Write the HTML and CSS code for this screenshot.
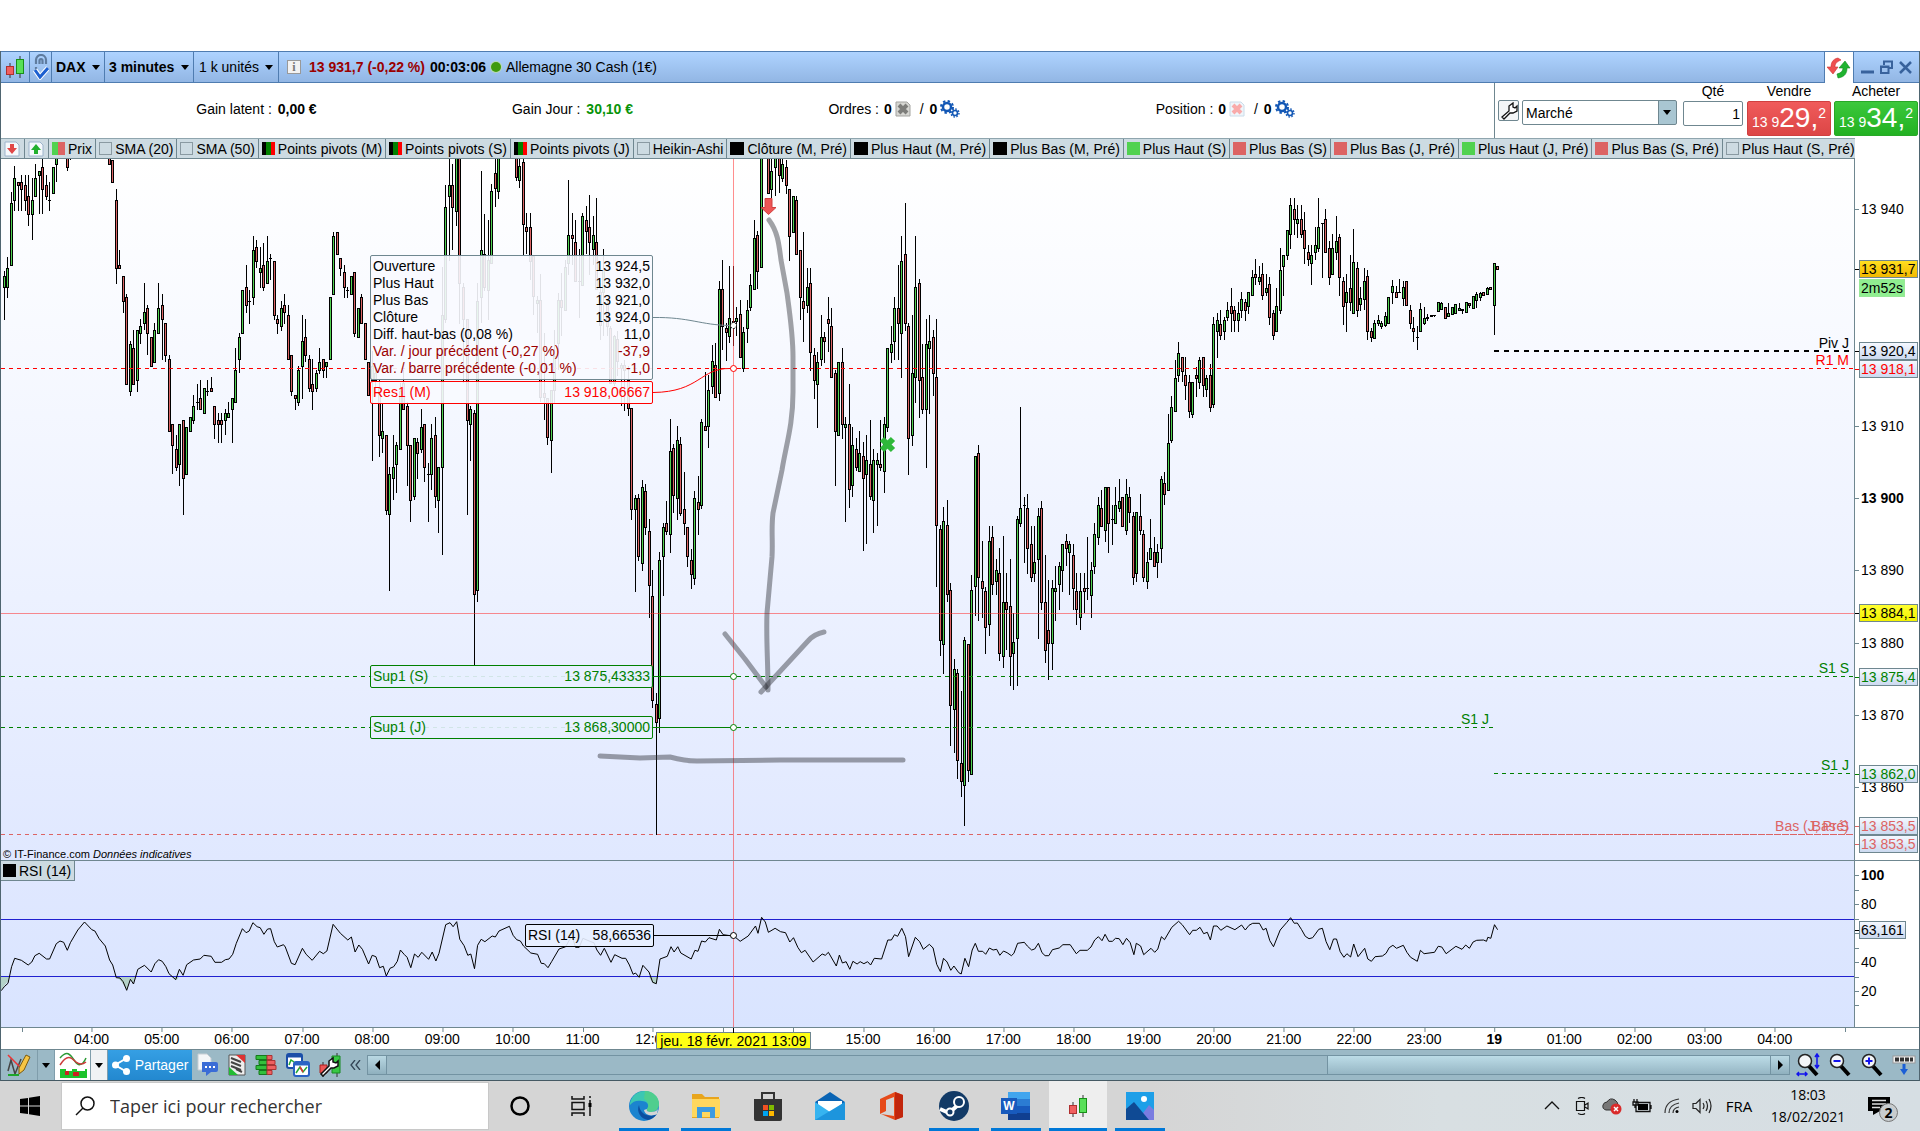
FILE: index.html
```html
<!DOCTYPE html>
<html lang="fr">
<head>
<meta charset="utf-8">
<title>DAX - 3 minutes</title>
<link rel="stylesheet" href="styles.css">
</head>
<body>
<svg width="0" height="0" class="defs" aria-hidden="true">
  <defs>
    <symbol id="candles" viewBox="0 0 20 24">
      <path d="M5 8v15M15 1v22" stroke="#333" stroke-width="1"/>
      <rect x="1.500" y="11.500" width="7" height="8" fill="#f06060" stroke="#b03030"/>
      <rect x="11.500" y="4.500" width="7" height="14" fill="#58e058" stroke="#189018"/>
    </symbol>
    <symbol id="gears" viewBox="0 0 20 18">
      <circle cx="7" cy="7" r="4" fill="none" stroke="#1257b5" stroke-width="2.500"/>
      <circle cx="7" cy="7" r="6" fill="none" stroke="#1257b5" stroke-width="2" stroke-dasharray="2.400 2.300"/>
      <circle cx="15" cy="13" r="2.500" fill="none" stroke="#1257b5" stroke-width="1.600"/>
      <circle cx="15" cy="13" r="4" fill="none" stroke="#1257b5" stroke-width="1.400" stroke-dasharray="1.600 1.500"/>
    </symbol>
    <symbol id="glass" viewBox="0 0 24 24">
      <path d="M12 12l9 10" stroke="#000" stroke-width="4"/>
      <circle cx="9" cy="8" r="6.500" fill="#f4f6f8" stroke="#222" stroke-width="1.500"/>
    </symbol>
  </defs>
</svg>

<main class="app">
  <header class="titlebar">
    <button class="cell cell-logo" aria-label="Graphique"><svg width="20" height="24"><use href="#candles"/></svg></button>
    <button class="cell cell-link" aria-label="Lier">
      <svg width="16" height="26" viewBox="0 0 16 26"><path d="M3 10V6a5 5 0 0 1 10 0v4M6.500 10V6.500a1.500 1.500 0 0 1 3 0V10" fill="none" stroke="#5f7c9f" stroke-width="2.200"/><path d="M3 13v2a5 5 0 0 0 10 0v-2" fill="none" stroke="#5f7c9f" stroke-width="2.200"/><path d="M2 16l5 7 8-9" fill="none" stroke="#fff" stroke-width="5"/><path d="M2 16l5 7 8-9" fill="none" stroke="#1c5fd0" stroke-width="3"/></svg>
    </button>
    <label class="cell pick"><select class="bold" aria-label="Instrument"><option>DAX</option></select></label>
    <label class="cell pick"><select class="bold" aria-label="Unité de temps"><option>3 minutes</option></select></label>
    <label class="cell pick"><select aria-label="Historique"><option>1 k unités</option></select></label>
    <div class="quote">
      <button class="info" aria-label="Informations">i</button>
      <b class="loss">13 931,7 (-0,22 %)</b>
      <b>00:03:06</b>
      <i class="dot"></i>
      <span>Allemagne 30 Cash (1€)</span>
    </div>
    <button class="swap" aria-label="Trading">
      <svg width="24" height="22" viewBox="0 0 24 22"><path d="M11 1C5 2 4 7 4 10H0l6 7 5-7H8c0-3 1-5 6-7z" fill="#ee4f4f" stroke="#c33" stroke-width=".6"/><path d="M11 21c7-1 9-5 9-10h3l-5-7-6 7h4c0 3-2 5-6 6z" fill="#1fb32f" stroke="#128a1e" stroke-width=".6"/></svg>
    </button>
    <div class="winbtns">
      <button aria-label="Réduire"><svg width="13" height="14"><path d="M0 12h13" stroke="#38629c" stroke-width="3"/></svg></button>
      <button aria-label="Restaurer"><svg width="13" height="14" viewBox="0 0 13 14"><path d="M4 5V1.500h8V8H9M3 1.500h9M1 6.500h7.500V13H1zM1 7h7" fill="none" stroke="#38629c" stroke-width="2"/></svg></button>
      <button aria-label="Fermer"><svg width="13" height="14" viewBox="0 0 13 14"><path d="M1 2l11 11M12 2L1 13" stroke="#38629c" stroke-width="2.500"/></svg></button>
    </div>
  </header>

  <section class="trade">
    <div class="stats">
      <p>Gain latent : <b>0,00 €</b></p>
      <p>Gain Jour : <b class="gain">30,10 €</b></p>
      <p class="with-icons">Ordres : <b>0</b>
        <button aria-label="Annuler les ordres"><svg width="16" height="16" viewBox="0 0 16 16"><path d="M1 1h11l3 3v11H1z" fill="#d6d6d2" stroke="#a3a3a0"/><path d="M4 4l8 8M12 4l-8 8" stroke="#7d7d7a" stroke-width="4"/></svg></button>
        <span>/ <b>0</b></span><button aria-label="Réglages des ordres"><svg width="20" height="18"><use href="#gears"/></svg></button></p>
      <p class="with-icons">Position : <b>0</b>
        <button aria-label="Clôturer la position"><svg width="16" height="16" viewBox="0 0 16 16"><path d="M1 1h11l3 3v11H1z" fill="#eff5fa" stroke="#cbdcea"/><path d="M4 4l8 8M12 4l-8 8" stroke="#f9aaaa" stroke-width="4"/></svg></button>
        <span>/ <b>0</b></span><button aria-label="Réglages de la position"><svg width="20" height="18"><use href="#gears"/></svg></button></p>
    </div>
    <form class="order">
      <button type="button" class="wrench" aria-label="Options"><svg width="18" height="18" viewBox="0 0 18 18"><path d="M2 15L9 9V4l4-3v4l2 1 2-2v5l-4 2h-3l-6 6z" fill="#fff" stroke="#111" stroke-width="1.300"/></svg></button>
      <label class="type"><select aria-label="Type d'ordre"><option>Marché</option></select></label>
      <div class="qty"><label for="qty">Qté</label><input id="qty" value="1"></div>
      <div class="side"><label for="sell">Vendre</label><button type="button" id="sell" class="sell"><small>13 9</small><span>29,</span><sup>2</sup></button></div>
      <div class="side"><label for="buy">Acheter</label><button type="button" id="buy" class="buy"><small>13 9</small><span>34,</span><sup>2</sup></button></div>
    </form>
  </section>

  <nav class="legend">
    <button class="arrow" aria-label="Vente"><svg width="16" height="16" viewBox="0 0 16 16"><path d="M1 1h11l3 3v11H1z" fill="#f5f9fc" stroke="#9db4cc"/><path d="M6 3h4v4h3l-5 6-5-6h3z" fill="#e04848"/></svg></button>
    <button class="arrow" aria-label="Achat"><svg width="16" height="16" viewBox="0 0 16 16"><path d="M1 1h11l3 3v11H1z" fill="#f5f9fc" stroke="#9db4cc"/><path d="M6 13h4V9h3L8 3 3 9h3z" fill="#22b02e"/></svg></button>
    <button><i class="sw price"></i>Prix</button>
    <button><i class="sw empty"></i>SMA (20)</button>
    <button><i class="sw empty"></i>SMA (50)</button>
    <button><i class="sw pivot"></i>Points pivots (M)</button>
    <button><i class="sw pivot"></i>Points pivots (S)</button>
    <button><i class="sw pivot"></i>Points pivots (J)</button>
    <button><i class="sw empty"></i>Heikin-Ashi</button>
    <button><i class="sw black"></i>Clôture (M, Pré)</button>
    <button><i class="sw black"></i>Plus Haut (M, Pré)</button>
    <button><i class="sw black"></i>Plus Bas (M, Pré)</button>
    <button><i class="sw green"></i>Plus Haut (S)</button>
    <button><i class="sw red"></i>Plus Bas (S)</button>
    <button><i class="sw red"></i>Plus Bas (J, Pré)</button>
    <button><i class="sw green"></i>Plus Haut (J, Pré)</button>
    <button><i class="sw red"></i>Plus Bas (S, Pré)</button>
    <button><i class="sw empty"></i>Plus Haut (S, Pré)</button>
  </nav>

  <section class="pane price-pane">
    <div class="plot">
      <svg id="price" viewBox="1 159 1853 701" preserveAspectRatio="none">
        <g id="bars" shape-rendering="crispEdges"></g>
        <g shape-rendering="crispEdges" fill="none">
          <path d="M1 368.500H1854" stroke="#f00" stroke-dasharray="4 4"/>
          <path d="M1494 351H1850" stroke="#000" stroke-width="2" stroke-dasharray="5 5"/>
          <path d="M1 676.500H1854" stroke="#008000" stroke-dasharray="4 4"/>
          <path d="M1 727.500H1494" stroke="#008000" stroke-dasharray="4 4"/>
          <path d="M1494 773.500H1850" stroke="#008000" stroke-dasharray="4 4"/>
          <path d="M1 834.500H1494" stroke="#dc6464" stroke-dasharray="4 4"/>
          <path d="M1494 834.500H1854" stroke="#dc6464" stroke-dasharray="7 1"/>
          <path d="M653 676.500H733M653 727.500H733" stroke="#008000"/>
          <path d="M1 613.500H1854M733.500 159V860" stroke="#ff3232" stroke-opacity=".55"/>
        </g>
        <path d="M653 317.500C690 317 700 325 730 325.500" fill="none" stroke="#6f8790"/>
        <path d="M653 392.500C700 392 700 368 730 368.500" fill="none" stroke="#f00"/>
        <g fill="#fff"><circle cx="733.500" cy="325.500" r="3" stroke="#000" stroke-dasharray="2 1"/><circle cx="733.500" cy="368.500" r="3" stroke="#f00"/><circle cx="733.500" cy="676.500" r="3" stroke="#008000"/><circle cx="733.500" cy="727.500" r="3" stroke="#008000"/></g>
        <path d="M765 198.500h7v9h4l-7.500 7-7.500-7h4z" fill="#ee5555" stroke="#d04040"/>
        <path d="M882 439l11 11M893 439l-11 11" stroke="#2fb83a" stroke-width="6"/>
        <g fill="none" stroke="#30333a" stroke-opacity=".45" stroke-width="5" stroke-linecap="round" stroke-linejoin="round">
          <path d="M769 220C778 232 779 245 781 260L787 293C790 315 793 335 793 357V392C793 425 786 445 782 470L773 513C771 530 773 540 772 557L767 613C766 640 768 660 768 690"/>
          <path d="M725 634L745 659 766 687"/><path d="M761 692L808 641Q814 634 824 632"/>
          <path d="M600 756L640 758 670 757Q685 761 697 761L780 760 903 760"/>
        </g>
      </svg>
      <div id="price-tags"></div>
      <dl class="tip bar-tip">
        <div><dt>Ouverture</dt><dd>13 924,5</dd></div>
        <div><dt>Plus Haut</dt><dd>13 932,0</dd></div>
        <div><dt>Plus Bas</dt><dd>13 921,0</dd></div>
        <div><dt>Clôture</dt><dd>13 924,0</dd></div>
        <div><dt>Diff. haut-bas (0,08 %)</dt><dd>11,0</dd></div>
        <div class="loss"><dt>Var. / jour précédent (-0,27 %)</dt><dd>-37,9</dd></div>
        <div class="loss"><dt>Var. / barre précédente (-0,01 %)</dt><dd>-1,0</dd></div>
      </dl>
      <dl class="tip res-tip"><div><dt>Res1 (M)</dt><dd>13 918,06667</dd></div></dl>
      <dl class="tip sup-tip sup-s"><div><dt>Sup1 (S)</dt><dd>13 875,43333</dd></div></dl>
      <dl class="tip sup-tip sup-j"><div><dt>Sup1 (J)</dt><dd>13 868,30000</dd></div></dl>
      <p class="credit">© IT-Finance.com <em>Données indicatives</em></p>
    </div>
    <div class="axis" id="price-axis"></div>
  </section>

  <section class="pane rsi-pane">
    <div class="plot">
      <svg id="rsi" viewBox="1 861 1853 166" preserveAspectRatio="none">
        <path d="M1 977V990L8 981 9 977zM117 977L121 981 127 990 130 979 133 983 135 977zM172 977L177 980 179 977zM649 977L653 983 656 984 658 977z" fill="#b4d2c8"/>
        <path d="M1 919.500H1854M1 976.500H1854" stroke="#2020d0" shape-rendering="crispEdges"/>
        <path id="rsi-line" fill="none" stroke="#000"/>
        <path d="M733.500 861V1027" stroke="#ff3232" stroke-opacity=".55" shape-rendering="crispEdges"/>
        <path d="M653 935.500H731" stroke="#000" shape-rendering="crispEdges"/>
        <circle cx="733.500" cy="935.500" r="3" fill="#fff" stroke="#000"/>
      </svg>
      <button class="rsi-name"><i class="sw black"></i>RSI (14)</button>
      <dl class="tip rsi-tip"><div><dt>RSI (14)</dt><dd>58,66536</dd></div></dl>
    </div>
    <div class="axis" id="rsi-axis"></div>
  </section>

  <section class="time-row"><div class="time-axis" id="time-axis"></div></section>

  <footer class="toolbar">
    <button class="tool draw" aria-label="Dessiner"><svg width="24" height="24" viewBox="0 0 24 24"><path d="M1 18L4 7l4 14 6-15M1 22h11" fill="none" stroke="#444" stroke-width="1.500"/><path d="M1 22h11" stroke="#1da62a" stroke-width="2"/><path d="M1 2l12 12" stroke="#e33" stroke-width="1.500"/><path d="M12 15L19 2l4 2-6 13-5 4z" fill="#f6c544" stroke="#7a5a10"/></svg></button>
    <button class="drop" aria-label="Plus d'outils"></button>
    <button class="tool style" aria-label="Indicateurs"><svg width="28" height="26" viewBox="0 0 28 26"><path d="M1 6C8-2 11 2 15 8s8 7 12-2" fill="none" stroke="#2a9a35" stroke-width="1.500"/><path d="M1 13C8 2 12 5 17 10q5 4 10 0" fill="none" stroke="#cc3a3a" stroke-width="1.500"/><path d="M1 17h6v2h6v-2h5v2h8v-2h2v9H1z" fill="#1ec32c"/><path d="M6 19h4v4H6zM14 20h6v4h-6z" fill="#c22"/></svg></button>
    <button class="drop light" aria-label="Plus d'indicateurs"></button>
    <button class="share"><svg width="18" height="20" viewBox="0 0 18 20"><path d="M15 3L3 10l12 7" fill="none" stroke="#fff" stroke-width="2"/><g fill="#fff"><circle cx="14.500" cy="3.500" r="3.500"/><circle cx="3.500" cy="10" r="3.500"/><circle cx="14.500" cy="16.500" r="3.500"/></g></svg>Partager</button>
    <div class="icons">
      <button aria-label="Commentaires"><svg width="22" height="24" viewBox="0 0 22 24"><path d="M1 1h9l4 4v12H1z" fill="#f4f6f8" stroke="#c7ced4"/><path d="M5 9h14q2 0 2 2v6q0 2-2 2h-5l-5 4v-4H5z" fill="#3a6cd6"/><path d="M8 14h2M12 14h2M16 14h2" stroke="#fff" stroke-width="2"/></svg></button>
      <button aria-label="Rapport"><svg width="18" height="22" viewBox="0 0 18 22"><path d="M1 1h16v20H1z" fill="#eee" stroke="#555"/><path d="M3 4l10 4M3 8l10 4M3 12l10 4M8 15l6 3" stroke="#444" stroke-width="2"/><path d="M8 1h9v8z" fill="#d33"/><path d="M1 13v8h9z" fill="#2b3"/></svg></button>
      <button aria-label="Carnet"><svg width="22" height="22" viewBox="0 0 22 22"><g fill="#32c03c" stroke="#147a1c"><path d="M1 1.500h11v4H1zM4 6.500h8v4H4zM1 11.500h11v4H1zM4 16.500h8v4H4z"/></g><g fill="#ee6060" stroke="#a33"><path d="M12 1.500h5v4h-5zM12 6.500h8v4h-8zM12 11.500h9v4h-9zM12 16.500h5v4h-5z"/></g></svg></button>
      <button aria-label="Fenêtres"><svg width="24" height="24" viewBox="0 0 24 24"><rect x="1" y="1" width="15" height="14" rx="2" fill="#fff" stroke="#1b4ea8" stroke-width="2"/><path d="M1 3h15" stroke="#1b4ea8" stroke-width="3"/><rect x="8" y="9" width="15" height="14" rx="2" fill="#fff" stroke="#2a63c4" stroke-width="2"/><path d="M8 11h15" stroke="#2a63c4" stroke-width="3"/><path d="M3 12l2-5 3 2M10 20l4-6 3 5 4-5" fill="none" stroke="#2a3" stroke-width="1.500"/><path d="M14 14l3 5" stroke="#d33" stroke-width="1.500"/></svg></button>
      <button aria-label="Stratégies"><svg width="22" height="24" viewBox="0 0 22 24"><path d="M4 9v15M18 0v24" stroke="#333"/><path d="M1 12h7v8H1z" fill="#e55"  stroke="#a22"/><path d="M13 3h8v17h-8z" fill="#38c844" stroke="#178a20"/><path d="M2 21l8-8V8l4-3v4l3 1 2-2v5l-4 2h-3l-8 8z" fill="#fff" stroke="#111" stroke-width="1.500"/></svg></button>
      <button class="fold" aria-label="Réduire la barre"><svg width="11" height="10" viewBox="0 0 11 10"><path d="M5 0L1 5l4 5M10 0L6 5l4 5" fill="none" stroke="#345" stroke-width="1.300"/></svg></button>
    </div>
    <div class="scroll">
      <button class="end left" aria-label="Défiler à gauche"></button>
      <div class="track"><div class="thumb"></div></div>
      <button class="end right" aria-label="Défiler à droite"></button>
    </div>
    <div class="zooms">
      <button aria-label="Zoom auto"><svg width="24" height="24" viewBox="0 0 24 24"><use href="#glass"/><path d="M21 2v12M19 4l2-3 2 3M19 12l2 3 2-3M1 21h10M3 19l-2 2 2 2M9 19l2 2-2 2" fill="none" stroke="#11e" stroke-width="1.500"/></svg></button>
      <button aria-label="Zoom arrière"><svg width="24" height="24" viewBox="0 0 24 24"><use href="#glass"/><path d="M5.500 8h7" stroke="#11e" stroke-width="2"/></svg></button>
      <button aria-label="Zoom avant"><svg width="24" height="24" viewBox="0 0 24 24"><use href="#glass"/><path d="M5.500 8h7M9 4.500v7" stroke="#11e" stroke-width="2"/></svg></button>
      <button aria-label="Clavier"><svg width="24" height="24" viewBox="0 0 24 24"><rect x="1" y="3" width="22" height="7" fill="#f2f2f2" stroke="#999"/><path d="M3 6.500h18" stroke="#333" stroke-width="4" stroke-dasharray="4 1"/><path d="M12 11v8" stroke="#1b5fd6" stroke-width="3"/><path d="M8 16h8l-4 6z" fill="#1b5fd6"/></svg></button>
    </div>
  </footer>
</main>

<footer class="taskbar">
  <button class="start" aria-label="Démarrer"><svg width="20" height="20" viewBox="0 0 20 20"><path d="M0 3l8-1v7.500H0zM9 1.800L20 0v9.500H9zM0 10.500h8V18l-8-1zM9 10.500h11V20L9 18.200z"/></svg></button>
  <label class="search"><svg width="20" height="20" viewBox="0 0 20 20"><circle cx="12.500" cy="7.500" r="6.500" fill="none" stroke="#111" stroke-width="1.500"/><path d="M8 12l-7 7" stroke="#111" stroke-width="1.500"/></svg><input placeholder="Taper ici pour rechercher" aria-label="Rechercher"></label>
  <nav class="apps">
    <button aria-label="Cortana"><svg width="22" height="22"><circle cx="11" cy="11" r="8.500" fill="none" stroke="#000" stroke-width="2.500"/></svg></button>
    <button aria-label="Affichage des tâches"><svg width="22" height="22" viewBox="0 0 22 22"><path d="M1 1v3h12V1M1 21v-3h12v3M1 7.500h12v7H1zM19 1v2M19 5v3M19 12v9" fill="none" stroke="#111" stroke-width="1.500"/><path d="M17.500 8h3v4h-3z"/></svg></button>
    <button class="open" aria-label="Edge"><svg width="30" height="30" viewBox="0 0 30 30"><circle cx="15" cy="15" r="15" fill="#1b84cf"/><path d="M1 12C3 4 9 0 16 0c8 0 14 6 14 13 0 5-4 8-8 8-3 0-5-1-4-3 3-4 0-8-5-8C8 9 4 10 1 14z" fill="#3cc7b2"/><path d="M16 0c8 0 14 6 14 13 0 5-4 8-8 8-3 0-5-1-4-3 3-4 0-9-3-10z" fill="#57d27f" opacity=".7"/><path d="M10 14c-3 7 2 14 9 15 4-1 7-3 9-6-7 4-17 1-18-9z" fill="#0c4fa0"/><path d="M18 18c-1 2 1 3 4 3 3 0 6-1 7-3l-1 5c-6 3-12 1-13-4z" fill="#d5d5d5"/></svg></button>
    <button class="open" aria-label="Explorateur"><svg width="28" height="26" viewBox="0 0 28 26"><path d="M0 1h10l3 3h14v21H0z" fill="#e8a51d"/><path d="M0 6h28v18H0z" fill="#ffd75e"/><path d="M5 25V14h18v11h-5v-6h-8v6z" fill="#3d9be0"/></svg></button>
    <button aria-label="Store"><svg width="28" height="30" viewBox="0 0 28 30"><path d="M8 9V2h12v7" fill="none" stroke="#333" stroke-width="2"/><path d="M0 8h28v20q0 2-2 2H2q-2 0-2-2z" fill="#333"/><path d="M9 14h5v5H9z" fill="#f25022"/><path d="M15 14h5v5h-5z" fill="#7fba00"/><path d="M9 20h5v5H9z" fill="#00a4ef"/><path d="M15 20h5v5h-5z" fill="#ffb900"/></svg></button>
    <button aria-label="Courrier"><svg width="30" height="28" viewBox="0 0 30 28"><path d="M0 10L15 0l15 10v18H0z" fill="#0a64b4"/><path d="M3 9h24v9L15 22 3 18z" fill="#fff"/><path d="M0 10l15 10L30 10v18H0z" fill="#36b4f0"/><path d="M0 28L30 10v18z" fill="#1d95dd"/></svg></button>
    <button aria-label="Office"><svg width="24" height="28" viewBox="0 0 24 28"><path d="M0 7L15 0l8 3v22l-8 3L1 22l13 2V5L6 8v11l-6 3z" fill="#e64a19"/><path d="M15 0l8 3v22l-8 3z" fill="#c2260c"/></svg></button>
    <button class="open" aria-label="Steam"><svg width="30" height="30" viewBox="0 0 30 30"><circle cx="15" cy="15" r="15" fill="#123a66"/><path d="M1 18l9 4 9-8" stroke="#fff" stroke-width="4" fill="none"/><circle cx="20" cy="11" r="5" fill="#123a66" stroke="#fff" stroke-width="2"/><circle cx="11" cy="21" r="3.500" fill="#123a66" stroke="#fff" stroke-width="2"/></svg></button>
    <button class="open" aria-label="Word"><svg width="30" height="28" viewBox="0 0 30 28"><path d="M7 0h22v7H7z" fill="#41a5ee"/><path d="M7 7h22v7H7z" fill="#2b7cd3"/><path d="M7 14h22v7H7z" fill="#185abd"/><path d="M7 21h22v7H7z" fill="#103f91"/><path d="M0 6h16v16H0z" fill="#185abd"/><text x="8" y="18" text-anchor="middle" class="word">W</text></svg></button>
    <button class="open active" aria-label="ProRealTime"><svg width="22" height="24"><use href="#candles"/></svg></button>
    <button class="open" aria-label="Photos"><svg width="28" height="28" viewBox="0 0 28 28"><path d="M0 0h28v28H0z" fill="#1e9fe8"/><path d="M12 28l11-15 5 5v10z" fill="#7a7ce0"/><path d="M0 17l8-7 15 18H0z" fill="#0f4a94"/><circle cx="18" cy="7" r="3" fill="#fff"/></svg></button>
  </nav>
  <div class="tray">
    <button aria-label="Icônes cachées"><svg width="16" height="16" viewBox="0 0 16 16"><path d="M1 11l7-7 7 7" fill="none" stroke="#111" stroke-width="1.300"/></svg></button>
    <button aria-label="Réunion"><svg width="16" height="18" viewBox="0 0 16 18"><path d="M2.500 4.500h8v9h-8zM11 8l3-2v6l-3-2M4 1.500Q8-.5 11 1.500M4 16.500q4 2 7 0" fill="none" stroke="#111" stroke-width="1.200"/></svg></button>
    <button aria-label="OneDrive"><svg width="20" height="18" viewBox="0 0 20 18"><path d="M4 13q-4-1-3-5 1-3 4-3 3-5 8-2 3 2 3 5 3 2 1 5z" fill="#777" stroke="#333"/><circle cx="14" cy="12" r="5.500" fill="#d92b2b"/><path d="M12 10l4 4M16 10l-4 4" stroke="#fff" stroke-width="1.500"/></svg></button>
    <button aria-label="Batterie"><svg width="20" height="14" viewBox="0 0 20 14"><path d="M4 3.500h14v9H4zM19 6v4M2 0v3M5 0v3M1 3h5v3H1zM3 6v3" fill="none" stroke="#111" stroke-width="1.300"/><path d="M6 5h10v6H6z"/></svg></button>
    <button aria-label="Wi-Fi"><svg width="18" height="16" viewBox="0 0 18 16"><path d="M2 15Q2 3 16 1M6 15Q6 7 16 5M10 15q0-5 6-6" fill="none" stroke="#333" stroke-width="1.200"/><circle cx="14" cy="13.500" r="1.500"/></svg></button>
    <button aria-label="Volume"><svg width="20" height="16" viewBox="0 0 20 16"><path d="M1 5.500h3l4-4v13l-4-4H1zM11 5q2 3 0 6M14 3q3 5 0 10M17 1q4 7 0 14" fill="none" stroke="#222" stroke-width="1.200"/></svg></button>
    <button class="lang">FRA</button>
    <button class="clock"><time>18:03</time><time>18/02/2021</time></button>
    <button class="notif" aria-label="Notifications"><svg width="22" height="18" viewBox="0 0 22 18"><path d="M0 0h22v14H12l-7 4v-4H0z"/><path d="M4 3.500h14M4 7h14M4 10.500h8" stroke="#ddd" stroke-width="1.500"/></svg><span class="badge">2</span></button>
  </div>
</footer>
<script src="chart.js"></script>
</body>
</html>
```

FILE: styles.css
```css
* { box-sizing: border-box; }
body {
  margin: 0;
  min-height: 100vh;
  padding-top: 51px;
  display: flex;
  flex-direction: column;
  background: #fff;
  color: #000;
  font: 14px/16px "Liberation Sans", Arial, sans-serif;
}
p, dl, dd { margin: 0; }
svg { display: block; flex: none; }
button, select, input { font: inherit; color: inherit; margin: 0; }
button { border: 0; padding: 0; background: none; }
select { appearance: none; border: 0; padding: 0; background: none; border-radius: 0; }
.defs { position: absolute; }
.bold { font-weight: bold; }
.loss { color: #9b0000; }
.gain { color: #089408; }

.app {
  flex: 1;
  display: flex;
  flex-direction: column;
  border-left: 1px solid #4f6570;
  border-right: 1px solid #4f6570;
  border-bottom: 1px solid #455a64;
}

/* title bar */
.titlebar {
  height: 32px;
  display: flex;
  border-top: 1px solid #4f7cb0;
  border-bottom: 1px solid #4f7cb0;
  background: linear-gradient(#aed3ff, #92b6e4);
}
.cell {
  display: flex;
  align-items: center;
  justify-content: center;
  border-right: 1px solid #4f7cb0;
}
.cell-logo { width: 29px; }
.cell-link { width: 22px; }
.pick { padding: 0 4px; gap: 6px; }
.pick:nth-child(5) { padding: 0 5px; }
.pick::after, .drop::after, .type::after {
  content: "";
  border: 4px solid transparent;
  border-top: 5px solid #000;
  border-bottom: 0;
}
.quote { flex: 1; display: flex; align-items: center; gap: 5px; padding-left: 8px; }
.info {
  width: 14px;
  height: 14px;
  margin-right: 3px;
  border: 1px solid #999;
  background: #f2f2f2;
  color: #777;
  font: bold 12px/12px "Liberation Serif", serif;
}
.dot { width: 10px; height: 10px; border-radius: 5px; background: #3f9a0c; box-shadow: 0 0 0 1px #b9d9b0; }
.swap {
  width: 30px;
  margin-bottom: -1px;
  display: flex;
  align-items: center;
  justify-content: center;
  border: solid #4f7cb0;
  border-width: 0 1px;
  background: #fff;
}
.winbtns { width: 65px; display: flex; align-items: center; justify-content: center; gap: 6px; }

/* account and order row */
.trade { height: 55px; display: flex; }
.stats { flex: 1; display: flex; align-items: center; justify-content: space-evenly; padding: 0 4px 3px 0; }
.stats b { margin-left: 2px; }
.with-icons { display: flex; align-items: center; gap: 3px; }
.with-icons span { margin-left: 6px; }
.order { width: 425px; display: flex; align-items: flex-start; border-left: 1px solid #6f8790; padding-left: 3px; }
.wrench {
  width: 21px;
  height: 21px;
  margin: 17px 3px 0 0;
  padding: 1px;
  border: 1px solid #6f8790;
  border-radius: 2px;
  background: #f4f6f7;
}
.type {
  width: 155px;
  height: 25px;
  margin-top: 17px;
  display: flex;
  align-items: center;
  justify-content: space-between;
  border: 1px solid #6f8790;
  border-radius: 2px;
  padding: 0 5px 0 3px;
  background: linear-gradient(90deg, #fff 135px, #6f8790 135px, #6f8790 136px, #a9c6d2 136px);
}
.type select { width: 120px; }
.qty { width: 60px; margin-left: 6px; display: flex; flex-direction: column; text-align: center; }
.qty input {
  width: 100%;
  height: 25px;
  margin-top: 2px;
  padding: 0 2px;
  text-align: right;
  border: 1px solid #6f8790;
  border-radius: 2px;
  background: #fff;
}
.side { width: 84px; margin-left: 4px; display: flex; flex-direction: column; text-align: center; }
.side + .side { margin-left: 3px; }
.side button {
  height: 35px;
  margin-top: 2px;
  display: flex;
  align-items: baseline;
  justify-content: center;
  border-radius: 2px;
  color: #fff;
  line-height: 32px;
}
.side small { font-size: 14px; }
.side span { font-size: 28px; }
.side sup { font-size: 14px; line-height: 10px; align-self: flex-start; padding-top: 6px; }
.sell { background: linear-gradient(#f05b5b, #dc4646); border: 1px solid #d04040; }
.buy { background: linear-gradient(#3cc83c, #22b122); border: 1px solid #28a828; }

/* indicator legend */
.legend { height: 21px; display: flex; border-top: 1px solid #8fa5ae; margin-right: 64px; overflow: hidden; }
.legend button, .rsi-name {
  display: flex;
  align-items: center;
  gap: 3px;
  padding: 0 3px;
  background: #cddbe2;
  border-right: 1px solid #6f8790;
  border-bottom: 1px solid #6f8790;
  white-space: nowrap;
}
.legend button:last-child { flex: 1; border-right: 0; padding-right: 0; }
.legend .arrow { width: 24px; }
.sw { width: 13px; height: 13px; flex: none; }
.legend .black { width: 14px; }
.price { background: linear-gradient(90deg, #50d250 50%, #dc6464 50%); }
.empty { border: 1px solid #8a9aa2; }
.pivot { background: linear-gradient(90deg, #000 34%, #008000 34% 67%, #f00 67%); }
.black { background: #000; }
.green { background: #50d250; }
.red { background: #dc6464; }

/* chart panes */
.pane { display: flex; border-bottom: 1px solid #6f8790; }
.price-pane { flex: 1; }
.rsi-pane { height: 167px; }
.plot { flex: 1; position: relative; border-right: 1px solid #6f8790; overflow: hidden; }
.price-pane .plot { background: linear-gradient(#fff, #f0f4ff 50%, #e0e8ff); }
.rsi-pane .plot { background: linear-gradient(#e0e8ff, #d9e4ff); }
.plot > svg { position: absolute; width: 100%; height: 100%; }
.axis { width: 64px; position: relative; background: #fff; }
.axis span { position: absolute; left: 6px; transform: translateY(-50%); white-space: nowrap; }
.axis span::before {
  content: "";
  position: absolute;
  left: -6px;
  top: 50%;
  width: 4px;
  height: 1px;
  background: #6f8790;
}
.axis .box {
  left: 4px;
  height: 18px;
  padding: 0 1px;
  border: 1px solid #6f8790;
  background: linear-gradient(#f4f8ff, #ccdaf0);
}
.axis .box::before { left: -5px; background: currentColor; }
.axis .last { background: linear-gradient(#ffdf20, #f2b800); }
.axis .cursor { background: linear-gradient(#ffff30, #f2f200); }
.axis .count { border-color: #98e898; background: #90ee90; }
.axis .count::before { display: none; }
.c-red { color: #f00; }
.c-green { color: #008000; }
.c-rose { color: #dc6464; }
.tag { position: absolute; transform: translateY(-50%); white-space: nowrap; }
.tip {
  position: absolute;
  left: 369px;
  width: 283px;
  padding: 2px;
  border: 1px solid #6f8790;
  border-radius: 2px;
  background: rgba(248, 250, 255, .9);
  line-height: 17px;
}
.tip div { display: flex; justify-content: space-between; }
.bar-tip { top: 96px; height: 125px; }
.res-tip { top: 222px; height: 23px; color: #f00; border-color: #f00; }
.sup-tip { height: 23px; color: #008000; border-color: #008000; background: rgba(232, 240, 255, .9); }
.sup-s { top: 506px; }
.sup-j { top: 557px; }
.rsi-tip { left: 524px; top: 63px; width: 129px; height: 23px; border-color: #000; background: rgba(232, 240, 255, .9); }
.credit { position: absolute; left: 2px; bottom: 0; font-size: 11px; line-height: 12px; }
.rsi-name { position: absolute; left: 0; top: 0; height: 20px; padding: 0 3px 0 2px; }

.time-row { padding-right: 64px; background: #fff; }
.time-axis { height: 21px; position: relative; }
.time-axis span { position: absolute; top: 3px; transform: translateX(-50%); }
.time-axis span::before { content: ""; position: absolute; left: 50%; top: -3px; width: 1px; height: 4px; background: #6f8790; }
.time-axis .now { top: 4px; width: 155px; height: 17px; transform: none; text-align: center; border: 1px solid #6f8790; background: #ffff14; white-space: nowrap; }
.time-axis .now::before { left: 76px; top: -5px; height: 5px; background: #000; }

/* tool bar */
.toolbar { height: 31px; display: flex; background: #9bb9c6; border-top: 1px solid #6f8790; }
.tool, .drop { display: flex; align-items: center; justify-content: center; border-right: 1px solid #7f9dab; }
.draw { width: 37px; }
.drop { width: 17px; }
.style { width: 36px; background: #fff; }
.light { background: #f0f2f4; }
.share {
  width: 84px;
  display: flex;
  align-items: center;
  justify-content: center;
  gap: 5px;
  background: linear-gradient(#359fe4, #2388cf);
  color: #fff;
}
.icons { width: 175px; display: flex; align-items: center; justify-content: space-around; padding-right: 2px; }
.scroll { flex: 1; display: flex; margin: 5px 2px 5px 0; border: 1px solid #7393a2; }
.end { width: 19px; display: flex; align-items: center; justify-content: center; background: linear-gradient(#b9d8e3, #8fb0be); }
.end::after { content: ""; border: 5px solid transparent; }
.left { border-right: 1px solid #7393a2; }
.left::after { border-left: 0; border-right-color: #000; }
.right { border-left: 1px solid #7393a2; }
.right::after { border-right: 0; border-left-color: #000; }
.track { flex: 1; display: flex; justify-content: flex-end; }
.thumb { width: 32%; border-left: 1px solid #7393a2; background: linear-gradient(#bcdce7, #96b6c4); }
.zooms { width: 127px; display: flex; align-items: center; justify-content: space-between; padding: 0 3px 0 4px; }

/* task bar */
.taskbar { height: 50px; display: flex; background: linear-gradient(90deg, #d5d5d5 60%, #d8dfe2 75%, #d6dee3); }
.start { width: 61px; display: flex; align-items: center; justify-content: center; padding-right: 2px; }
.search { width: 428px; margin: 1px 0; padding-left: 13px; display: flex; align-items: center; gap: 15px; background: #fff; border: 1px solid #c8c8c8; }
.search input { flex: 1; border: 0; background: none; font: 18px/24px "Open Sans", "Noto Sans", sans-serif; padding: 0; }
.search input::placeholder { color: #333; opacity: 1; }
.apps { flex: 1; display: flex; }
.apps button { width: 62px; display: flex; align-items: center; justify-content: center; }
.open { background: linear-gradient(#0078d7, #0078d7) center bottom / 50px 3px no-repeat; }
.apps .active { background: linear-gradient(#0078d7, #0078d7) center bottom / 58px 3px no-repeat, linear-gradient(#eee, #eee) center / 58px 100% no-repeat; }
.word { font: bold 12px "Liberation Sans", sans-serif; fill: #fff; }
.tray { display: flex; align-items: center; font: 15px/22px "Open Sans", "Noto Sans", sans-serif; }
.tray button { width: 30px; display: flex; align-items: center; justify-content: center; }
.tray .lang { width: 44px; }
.tray .clock { width: 94px; flex-direction: column; font-size: 14px; }
.tray .notif { width: 64px; position: relative; padding-right: 16px; margin-right: 1px; }
.badge {
  position: absolute;
  left: 24px;
  top: 6px;
  width: 19px;
  height: 19px;
  border: 1px solid #777;
  border-radius: 10px;
  background: #c8ccce;
  font: bold 14px/17px "Open Sans", sans-serif;
}
```

FILE: chart.js
```js
// Bars: x, high, body top, body bottom, low (thirds of a pixel), u = up, d = down.
const blocks = [
  [0, `13 365 378 412 510 u;22 323 354 412 444 u;34 128 160 346 346 u;43 50 85 151 185 u;55 97 97 106 185 d;64 75 97 118 185 d;76 75 106 151 185 d;85 75 139 194 228 d;97 85 151 194 272 u;106 42 85 139 139 u;118 63 63 76 194 u;127 27 52 118 194 d;139 76 106 139 151 d;148 96 151 151 185 u;160 52 52 130 130 u;169 20 20 43 98 u;202 20 20 52 65 d;211 20 20 20 32 d;328 20 20 43 43 d;337 31 31 97 97 d;349 117 151 355 402 d;358 300 346 355 355 d;370 379 379 454 489 d;379 432 442 703 703 d;391 573 583 724 738 u;400 540 595 703 703 d;412 541 541 691 726 u;421 507 529 550 584 u;433 399 487 520 542 u;442 465 475 550 617 d;454 562 562 649 649 d;463 519 541 637 637 u;475 399 475 550 550 u;487 432 466 508 630 d;496 519 519 616 638 d;508 615 628 844 844 d;517 823 823 886 974 d;529 855 898 952 965 d;538 823 823 943 1008 u;550 810 810 985 1095 d;559 832 832 973 973 u;571 801 802 844 844 u;580 735 769 811 823 u;592 703 757 757 780 u;601 690 745 778 778 d;613 715 715 790 790 u;622 691 724 724 738 u;634 681 715 724 724 d;643 769 769 823 867 d;655 789 811 823 879 d;664 789 811 823 879 d;676 778 790 811 857 u;685 757 790 802 802 u;697 745 745 778 879 u;706 594 660 757 757 u;718 549 562 628 671 u;727 420 421 550 550 u;739 345 412 466 489 d;748 420 454 454 522 u;760 258 301 442 467 u;769 270 292 334 356 d;781 291 355 367 415 u;790 279 346 412 423 d;802 258 334 400 400 u;811 312 325 325 390 u;823 334 334 496 510 d;832 496 508 520 552 d;844 453 475 529 543 u;853 432 466 487 522 d;865 465 496 628 628 d;874 616 616 724 738 d;886 736 736 745 780 d;895 648 661 757 770 u;907 495 574 649 747 u;916 507 562 616 638 d;928 615 628 715 726 d;937 628 703 724 780 d;949 661 670 715 727 u;958 594 637 661 672 u;970 627 628 661 684 d;979 637 637 649 684 u;991 442 442 628 628 u;1000 246 259 433 433 u;1012 247 247 313 313 d;1021 325 325 355 380 d;1033 345 367 412 444 d;1042 411 421 421 444 u;1054 379 379 433 433 u;1063 367 367 550 563 d;1075 475 475 562 562 u;1084 432 442 520 520 d;1096 520 520 628 628 d;1105 637 637 736 736 d`],
  [360, `37 605 650 690 933 u;46 640 670 690 740 u;58 690 715 856 921 d;67 760 844 865 911 u;79 855 856 1081 1095 d;88 951 973 1093 1323 u;100 855 952 985 1052 u;109 876 886 943 1029 u;121 700 725 898 898 u;130 660 700 778 778 d;142 757 769 886 1008 d;151 885 886 1051 1116 d;163 865 865 1040 1052 u;172 865 877 910 987 d;184 778 832 898 911 u;193 822 823 952 998 d;205 941 973 973 1116 u;214 822 865 973 1020 u;226 801 856 1040 1074 d;235 951 952 1051 1149 u;247 352 496 952 1215 u;256 105 172 508 520 u;268 20 106 139 335 u;277 42 106 172 302 d;289 20 20 185 228 u;298 20 20 401 522 d;310 400 412 508 700 d;322 508 508 811 1095 d;331 770 778 823 933 u;343 780 790 1333 1545 d;352 400 454 1322 1356 u;364 63 301 442 520 u;373 192 313 412 423 d;385 210 331 421 510 u;394 103 124 340 340 u;406 20 70 115 171 d;415 20 20 124 147 u;469 20 20 82 93 d;478 20 49 91 115 u;490 20 37 223 320 d;499 190 232 244 313 d;511 190 232 335 390 d;520 320 320 439 495 d;532 440 451 461 550 u;541 372 451 742 757 d;553 550 730 742 810 d;562 745 745 862 885 d;574 721 721 871 971 u;583 540 620 720 760 u;595 430 451 580 660 u;604 370 451 472 560 d;616 330 352 480 485 u;625 90 256 340 375 u;637 190 256 265 345 d;646 210 277 394 394 d;658 297 394 394 505 u;667 190 199 406 406 u;679 168 211 244 313 d;688 135 232 277 375 d;700 198 256 298 345 u;709 144 277 418 420 d;721 400 427 526 570 d;730 297 360 427 560 u;742 450 460 530 560 d;751 530 535 700 700 d;763 555 560 700 710 u;772 545 568 635 680 d;784 640 645 655 770 u;793 630 645 660 785 d;805 650 690 775 798 d;814 775 775 1078 1112 d;826 1035 1045 1078 1328 u;835 1033 1045 1220 1233 d;847 990 1012 1241 1263 u;856 1002 1024 1133 1155 d;868 1109 1144 1307 1404 d;877 1260 1339 1652 1676 d;889 1629 1663 1718 2055 d;898 1206 1231 1705 1751 u;910 1120 1132 1220 1340 u;919 1055 1120 1144 1155 d;931 807 904 1153 1209 u;940 882 895 1036 1090 d;952 828 871 1045 1112 u;961 861 883 1090 1100 d;973 968 1078 1120 1155 d;982 1132 1132 1220 1252 d;994 1197 1231 1274 1317 d;1003 1023 1045 1285 1307 u;1015 980 1057 1078 1155 d;1024 807 817 1066 1078 u;1036 668 829 841 841 d;1045 675 721 829 896 u;1057 587 634 709 732 u;1066 579 646 742 742 d;1078 393 418 730 755 u;1087 330 418 529 602 d;1099 520 535 547 635 d;1108 350 505 559 580 u;1120 350 515 530 590 d;1129 472 505 515 560 u;1141 450 493 622 622 d;1150 533 547 655 668 u;1162 450 481 535 580 u;1171 372 406 472 484 u;1183 210 265 418 418 u;1192 243 256 364 418 d;1204 20 20 352 352 u;1225 20 20 130 130 d;1234 20 64 118 145 u;1246 20 20 52 140 u;1258 20 20 76 130 d;1267 20 43 85 98 u;1279 30 52 106 132 d;1288 118 118 259 335 d;1300 139 139 247 247 u;1309 140 151 313 313 d;1321 301 301 442 510 d`],
  [800, `10 246 454 475 576 d;22 354 412 466 489 u;31 354 400 607 663 d;43 594 616 691 747 d;52 606 637 703 834 u;64 495 562 628 650 u;73 548 562 574 640 d;85 441 508 520 608 d;94 474 529 682 682 d;106 660 670 844 1008 d;115 637 637 856 856 u;127 594 637 823 867 d;136 801 823 832 1116 u;148 702 823 1018 1074 d;157 831 886 1006 1041 u;169 864 898 952 965 d;178 843 910 964 964 u;190 876 919 985 1203 d;199 855 931 973 1182 u;211 810 943 1039 1052 d;220 897 931 1051 1149 u;232 909 931 943 1128 u;241 810 943 952 965 d;253 801 823 964 1029 u;262 595 595 832 846 u;274 528 583 607 640 u;283 441 475 574 630 u;295 345 475 520 630 d;304 258 334 550 684 u;316 159 313 520 543 d;325 519 529 865 975 d;337 495 670 856 888 u;346 258 412 682 760 u;358 387 400 691 804 d;367 582 682 778 792 d;379 507 583 778 954 u;388 495 574 595 792 u;400 540 562 670 738 d;409 507 682 1126 1311 d;421 1125 1138 1471 1518 d;430 1071 1114 1483 1572 u;442 1050 1126 1334 1356 d;451 1299 1321 1667 1788 d;463 1527 1558 1678 1809 u;472 1557 1570 1831 1887 d;484 1623 1840 1894 1941 d;493 1461 1471 1907 2028 u;505 1482 1483 1862 1896 d;514 1275 1321 1873 1873 u;526 919 919 1310 1398 u;535 885 910 1283 1413 d;547 1173 1294 1316 1404 d;556 1313 1324 1433 1512 d;568 1128 1174 1424 1458 u;577 1128 1162 1304 1337 d;589 1227 1261 1295 1337 u;598 1194 1270 1511 1533 d;610 1160 1357 1520 1554 u;619 1269 1357 1379 1500 d;631 1227 1369 1520 1608 d;640 1389 1477 1511 1620 u;652 1098 1108 1466 1608 u;661 771 1075 1120 1131 u;673 1041 1067 1067 1239 u;682 1032 1075 1195 1272 d;694 1128 1183 1283 1296 d;703 1128 1237 1271 1296 u;715 1074 1099 1228 1467 u;724 1053 1075 1357 1380 d;736 1215 1357 1500 1540 d;745 1292 1440 1480 1590 d;757 1292 1315 1480 1560 u;766 1248 1315 1325 1413 u;778 1236 1249 1303 1380 u;787 1183 1183 1261 1326 u;799 1152 1174 1195 1250 d;808 1173 1183 1207 1337 u;820 1183 1216 1315 1380 d;829 1270 1324 1379 1425 d;841 1270 1324 1403 1440 u;853 1270 1315 1325 1390 d;862 1161 1315 1315 1350 u;874 1237 1261 1336 1404 u;883 1120 1153 1249 1272 u;895 1041 1066 1162 1185 u;904 1020 1075 1130 1130 d;916 1012 1012 1141 1176 u;925 1012 1012 1120 1209 d;937 1065 1108 1108 1185 u;946 1011 1066 1120 1120 u;958 987 1054 1075 1088 u;967 1042 1042 1129 1129 d;979 987 1033 1141 1155 u;988 1011 1042 1087 1121 d;1000 1087 1099 1283 1305 d;1009 1087 1087 1271 1296 u;1021 1032 1099 1141 1155 d;1030 1141 1153 1283 1296 d;1042 1206 1237 1295 1317 u;1051 1107 1195 1228 1228 u;1063 1161 1207 1249 1249 d;1072 1183 1207 1238 1284 u;1084 978 988 1195 1239 u;1093 966 1000 1033 1067 d;1105 792 880 1021 1021 u;1114 738 772 872 880 u;1126 630 685 784 784 u;1135 576 610 677 698 u;1147 622 622 665 698 d;1156 622 676 707 752 d;1168 675 697 784 806 d;1177 697 697 794 806 u;1189 652 676 685 741 d;1198 621 631 697 719 u`],
  [1200, `10 622 622 707 741 d;19 675 685 718 741 u;31 642 676 773 786 d;40 501 523 764 774 u;52 489 511 544 624 u;61 480 523 556 570 d;73 501 511 544 570 u;82 456 481 502 514 u;94 414 469 490 546 d;103 468 481 511 546 d;115 456 490 511 546 u;124 426 448 481 504 u;136 448 457 481 514 d;145 427 427 469 492 u;157 360 382 436 436 u;166 327 373 382 405 d;178 348 382 394 405 u;187 339 373 436 450 d;199 372 415 427 438 u;208 381 403 502 525 d;220 480 490 556 570 d;229 414 469 544 544 u;241 294 361 481 492 u;250 316 316 349 438 u;262 241 241 317 330 u;271 144 166 253 297 u;283 144 178 208 255 d;292 165 208 220 264 u;304 165 208 253 264 d;313 186 241 295 342 d;325 285 307 328 350 d;334 285 316 340 405 u;346 231 286 307 330 u;355 144 232 295 308 u;367 220 220 220 384 u;376 177 208 307 307 d;388 273 295 382 405 d;397 252 295 373 373 u;409 198 274 307 330 u;418 252 262 382 438 d;430 381 394 469 525 d;439 372 427 457 546 u;451 315 415 457 483 d;460 237 337 490 490 u;472 337 355 481 501 d;481 411 445 463 483 u;493 354 394 448 480 u;502 360 379 544 570 d;514 534 544 562 576 d;523 510 520 565 565 u;535 495 511 520 530 u;544 513 520 529 537 u;556 486 499 526 532 u;565 442 442 520 520 u;577 390 409 427 462 u;589 408 427 442 442 d;598 387 427 427 427 u;610 393 412 445 468 u;619 394 394 466 466 d;631 465 481 520 537 d;640 501 535 544 576 d;652 528 562 562 600 u;661 459 478 544 544 u;673 471 505 520 525 u;682 492 503 505 513 d;694 496 496 499 503 u;703 496 496 496 503 u;715 456 457 484 484 u;724 458 460 478 478 u;736 472 472 505 505 d;745 459 490 499 499 u;757 472 472 493 493 u;766 463 463 490 490 u;778 459 475 481 481 u;787 478 478 481 492 d;799 457 457 487 487 u;808 459 460 466 474 d;820 439 439 475 475 u;829 426 433 451 474 u;841 426 430 442 453 u;850 427 427 436 436 d;862 411 415 433 433 u;871 412 412 418 418 d;883 340 340 466 555 u;892 349 349 358 358 d`]
];

const rect = (x, y, w, h) => `M${x} ${y}h${w}v${h}h${-w}z`;
const paths = { k: '', u: '', d: '' };
for (const [x0, list] of blocks) {
  for (const bar of list.split(';')) {
    const f = bar.split(' ');
    const x = x0 + Math.floor(f[0] / 3);
    const [hi, top, bot, lo] = f.slice(1, 5).map(v => 150 + Math.floor(v / 3));
    paths.k += rect(x, hi, 1, top - hi) + rect(x - 1, top, 3, bot - top + 1) + rect(x, bot, 1, lo - bot);
    if (bot - top > 1) paths[f[5]] += rect(x, top + 1, 1, bot - top - 1);
  }
}
document.getElementById('bars').innerHTML =
  `<path d="${paths.k}" fill="#000"/><path d="${paths.u}" fill="#50d250"/><path d="${paths.d}" fill="#dc6464"/>`;

// RSI vertices, in two halves of 960 px each.
const rsi = [
  [0, '2,452 7,440 13,430 19,380 24,355 35,361 46,375 52,366 57,347 64,340 76,357 81,357 92,311 98,303 104,307 110,331 115,308 127,270 138,246 150,269 155,273 162,296 172,318 179,360 184,375 190,413 196,414 201,425 207,451 213,418 218,432 225,388 236,376 247,396 253,371 259,359 265,364 271,380 276,401 287,419 293,388 299,406 305,374 316,360 327,357 333,346 345,349 351,367 362,367 368,359 374,357 380,343 386,310 396,266 402,278 407,273 413,248 420,260 425,263 431,283 437,267 442,266 448,305 453,321 463,314 466,321 476,370 482,374 494,325 500,343 510,361 522,334 528,341 534,333 544,253 556,280 568,300 574,291 580,336 586,315 592,328 602,372 608,346 614,350 620,383 626,379 631,408 637,385 643,380 649,364 654,330 660,343 665,352 671,383 677,342 683,352 689,337 700,358 706,336 712,363 717,340 728,254 735,248 740,260 746,245 751,298 758,317 764,346 769,342 775,386 780,316 786,298 792,305 804,288 809,291 815,273 832,259 838,286 844,299 850,303 855,318 867,339 878,343 884,370 889,371 895,383 901,365 913,327 924,320 930,300 935,290 940,322 946,322 952,295 965,305 970,308 975,330 981,346 987,325 993,348 998,367 1004,344 1016,355 1022,355 1028,375 1034,403 1038,399 1044,412 1050,376 1060,396 1066,427 1072,431 1078,357 1090,349 1096,320 1101,336 1107,320 1112,339 1129,357 1135,331 1140,334 1146,303 1152,306 1158,293 1170,300 1175,268 1181,284 1193,287 1198,287 1209,304 1222,288 1234,258 1238,280 1244,232 1250,246 1255,277 1266,265 1275,275 1283,278 1290,306 1296,293 1303,322 1309,338 1315,331 1328,366 1343,342 1348,346 1353,337 1366,378 1371,345 1376,369 1382,365 1388,388 1393,364 1400,372 1405,365 1411,371 1417,365 1422,375 1428,355 1440,357 1450,300 1456,300 1461,284 1466,289 1473,265 1479,290 1484,350 1495,292 1502,305 1508,328 1518,313 1524,324 1530,373 1536,395 1541,355 1547,366 1553,391 1558,378 1566,398'],
  [960, '2,402 8,355 14,380 20,330 25,310 30,334 37,334 42,343 48,324 54,330 60,328 65,346 71,333 77,338 84,347 88,340 94,310 105,307 110,318 117,330 122,327 128,310 134,338 139,347 145,347 151,329 162,324 168,314 180,314 190,341 196,331 208,331 214,321 220,300 226,290 232,302 237,283 243,304 249,304 254,295 260,296 266,314 272,295 278,308 284,344 288,310 295,318 300,344 312,325 318,337 323,327 329,290 334,299 346,262 357,244 363,254 375,284 380,271 386,271 392,262 398,281 404,277 409,300 414,258 420,258 426,271 436,258 449,269 460,255 466,270 472,256 478,250 489,250 495,270 500,265 506,302 512,320 523,270 534,247 540,233 546,250 551,249 558,269 564,289 570,296 576,293 586,268 592,265 598,305 604,329 610,297 615,297 621,335 627,352 632,341 638,351 643,312 650,350 661,325 666,357 672,364 678,350 690,348 696,340 701,323 707,316 713,325 724,316 730,337 736,352 747,364 752,331 758,341 775,337 781,319 787,321 794,341 810,319 820,328 826,315 832,325 838,306 844,301 855,300 860,304 862,292 867,295 873,254 878,269']
];
document.getElementById('rsi-line').setAttribute('d', 'M' + rsi.flatMap(([x0, pts]) =>
  pts.split(' ').map(p => {
    const [x, y] = p.split(',');
    return `${(x0 + x * 960 / 1568).toFixed(1)} ${(840 + y / 3).toFixed(1)}`;
  })).join('L'));

// Axis and line labels: text, position, classes.
const pct = (v, size) => `${(v / size * 100).toFixed(3)}%`;
document.getElementById('price-axis').innerHTML = [
  ['13 940', 50], ['13 910', 267], ['<b>13 900</b>', 339], ['13 890', 411], ['13 880', 484], ['13 870', 556], ['13 860', 628],
  ['13 931,7', 110, 'box last'], ['2m52s', 129, 'box count'], ['13 920,4', 192, 'box'], ['13 918,1', 210, 'box c-red'],
  ['13 884,1', 454, 'box cursor'], ['13 875,4', 518, 'box c-green'], ['13 862,0', 615, 'box c-green'],
  ['13 853,5', 667, 'box c-rose'], ['13 853,5', 685, 'box c-rose']
].map(([t, y, c = '']) => `<span class="${c}" style="top:${pct(y, 701)}">${t}</span>`).join('');
document.getElementById('rsi-axis').innerHTML = [
  ['<b>100</b>', 14], ['', 29], ['80', 43], ['', 58], ['', 72], ['', 87], ['40', 101], ['', 116], ['20', 130], ['', 144], ['63,161', 69, 'box']
].map(([t, y, c = '']) => `<span class="${c}" style="top:${pct(y, 166)}">${t}</span>`).join('');
document.getElementById('price-tags').innerHTML = [
  ['Piv J', 184, 5, ''], ['R1 M', 201, 5, 'c-red'], ['S1 S', 509, 5, 'c-green'], ['S1 J', 560, 365, 'c-green'],
  ['S1 J', 606, 5, 'c-green'], ['Bas (J, Pré)', 667, 5, 'c-rose'], ['Bas S', 667, 5, 'c-rose']
].map(([t, y, r, c]) => `<span class="tag ${c}" style="top:${pct(y, 701)};right:${pct(r, 1853)}">${t}</span>`).join('');

// The hours under the cursor's date label get a tick only.
const covered = ['13:00', '14:00'];
const hours = ['', ...Array.from({ length: 20 }, (_, i) => String(i + 4).padStart(2, '0') + ':00'), '<b>19</b>', '01:00', '02:00', '03:00', '04:00', ''];
document.getElementById('time-axis').innerHTML = hours.map((t, i) =>
  `<span style="left:${pct(20.5 + i * 70.13, 1854)}">${covered.includes(t) ? '' : t}</span>`).join('') +
  `<span class="now" style="left:${pct(655, 1854)}">jeu. 18 févr. 2021 13:09</span>`;
```
